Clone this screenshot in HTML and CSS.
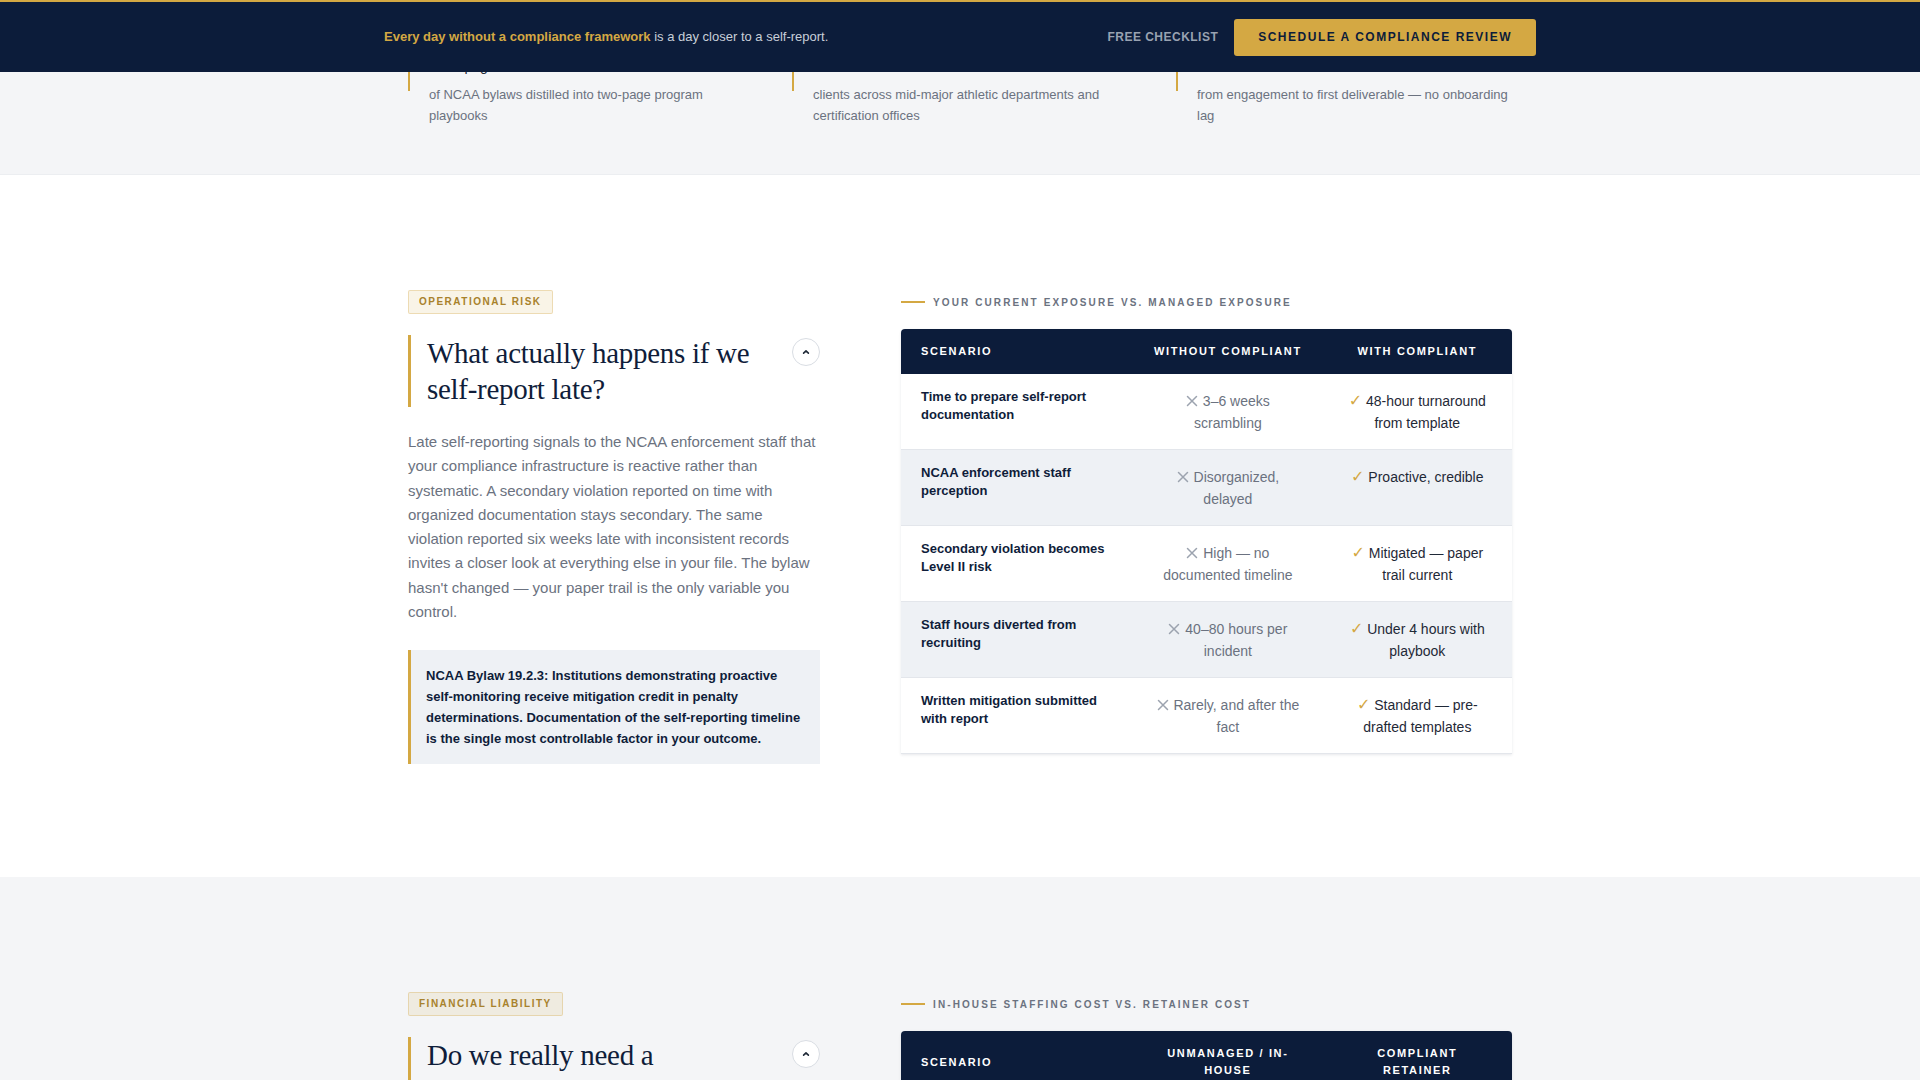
FILE: index.html
```html
<!DOCTYPE html>
<html lang="en">
<head>
<meta charset="utf-8">
<title>Compliant — NCAA Compliance</title>
<link rel="stylesheet" href="styles.css">
</head>
<body>
<header class="topbar">
  <div class="topbar-inner">
    <p class="topbar-msg"><strong>Every day without a compliance framework</strong> is a day closer to a self-report.</p>
    <nav class="topbar-actions">
      <a class="link-checklist" href="#">FREE CHECKLIST</a>
      <a class="btn-gold" href="#">SCHEDULE A COMPLIANCE REVIEW</a>
    </nav>
  </div>
</header>

<section class="stats">
  <div class="container stats-grid">
    <div class="stat">
      <div class="stat-head">
        <div class="stat-num">1,100+</div>
        <div class="stat-label">300+ pages</div>
      </div>
      <p class="stat-desc">of NCAA bylaws distilled into two-page program playbooks</p>
    </div>
    <div class="stat">
      <div class="stat-head">
        <div class="stat-num">40+</div>
        <div class="stat-label">active clients</div>
      </div>
      <p class="stat-desc">clients across mid-major athletic departments and certification offices</p>
    </div>
    <div class="stat">
      <div class="stat-head">
        <div class="stat-num">48 hrs</div>
        <div class="stat-label">to kickoff</div>
      </div>
      <p class="stat-desc">from engagement to first deliverable — no onboarding lag</p>
    </div>
  </div>
</section>

<section class="risk risk-white">
  <div class="container risk-grid">
    <div class="risk-copy">
      <span class="badge">OPERATIONAL RISK</span>
      <div class="q-row">
        <h2 class="q-title">What actually happens if we self-report late?</h2>
        <button class="toggle" aria-label="Collapse">
          <svg width="10" height="10" viewBox="0 0 10 10"><path d="M2.6 6.1 L5 3.8 L7.4 6.1" fill="none" stroke="#1f2937" stroke-width="1.6" stroke-linecap="round" stroke-linejoin="round"/></svg>
        </button>
      </div>
      <p class="q-body">Late self-reporting signals to the NCAA enforcement staff that your compliance infrastructure is reactive rather than systematic. A secondary violation reported on time with organized documentation stays secondary. The same violation reported six weeks late with inconsistent records invites a closer look at everything else in your file. The bylaw hasn't changed — your paper trail is the only variable you control.</p>
      <div class="callout">NCAA Bylaw 19.2.3: Institutions demonstrating proactive self-monitoring receive mitigation credit in penalty determinations. Documentation of the self-reporting timeline is the single most controllable factor in your outcome.</div>
    </div>
    <div class="risk-data">
      <div class="eyebrow"><span class="dash"></span>YOUR CURRENT EXPOSURE VS. MANAGED EXPOSURE</div>
      <table class="cmp">
        <colgroup><col class="c1"><col class="c2"><col class="c3"></colgroup>
        <thead>
          <tr><th class="th-left">SCENARIO</th><th>WITHOUT COMPLIANT</th><th>WITH COMPLIANT</th></tr>
        </thead>
        <tbody>
          <tr><td class="sc">Time to prepare self-report documentation</td><td class="bad"><svg class="x" width="12" height="12" viewBox="0 0 12 12"><path d="M1.5 1.5 L10.5 10.5 M10.5 1.5 L1.5 10.5" stroke="#9ca3af" stroke-width="1.5" stroke-linecap="round"/></svg> 3–6 weeks scrambling</td><td class="good"><span class="ck">✓</span> 48-hour turnaround from template</td></tr>
          <tr><td class="sc">NCAA enforcement staff perception</td><td class="bad"><svg class="x" width="12" height="12" viewBox="0 0 12 12"><path d="M1.5 1.5 L10.5 10.5 M10.5 1.5 L1.5 10.5" stroke="#9ca3af" stroke-width="1.5" stroke-linecap="round"/></svg> Disorganized, delayed</td><td class="good"><span class="ck">✓</span> Proactive, credible</td></tr>
          <tr><td class="sc">Secondary violation becomes Level II risk</td><td class="bad"><svg class="x" width="12" height="12" viewBox="0 0 12 12"><path d="M1.5 1.5 L10.5 10.5 M10.5 1.5 L1.5 10.5" stroke="#9ca3af" stroke-width="1.5" stroke-linecap="round"/></svg> High — no documented timeline</td><td class="good"><span class="ck">✓</span> Mitigated — paper trail current</td></tr>
          <tr><td class="sc">Staff hours diverted from recruiting</td><td class="bad"><svg class="x" width="12" height="12" viewBox="0 0 12 12"><path d="M1.5 1.5 L10.5 10.5 M10.5 1.5 L1.5 10.5" stroke="#9ca3af" stroke-width="1.5" stroke-linecap="round"/></svg> 40–80 hours per incident</td><td class="good"><span class="ck">✓</span> Under 4 hours with playbook</td></tr>
          <tr><td class="sc">Written mitigation submitted with report</td><td class="bad"><svg class="x" width="12" height="12" viewBox="0 0 12 12"><path d="M1.5 1.5 L10.5 10.5 M10.5 1.5 L1.5 10.5" stroke="#9ca3af" stroke-width="1.5" stroke-linecap="round"/></svg> Rarely, and after the fact</td><td class="good"><span class="ck">✓</span> Standard — pre-drafted templates</td></tr>
        </tbody>
      </table>
    </div>
  </div>
</section>

<section class="risk risk-gray">
  <div class="container risk-grid">
    <div class="risk-copy">
      <span class="badge">FINANCIAL LIABILITY</span>
      <div class="q-row">
        <h2 class="q-title">Do we really need a compliance retainer?</h2>
        <button class="toggle" aria-label="Collapse">
          <svg width="10" height="10" viewBox="0 0 10 10"><path d="M2.6 6.1 L5 3.8 L7.4 6.1" fill="none" stroke="#1f2937" stroke-width="1.6" stroke-linecap="round" stroke-linejoin="round"/></svg>
        </button>
      </div>
      <p class="q-body">A single Level II case can cost more in outside counsel, staff time and lost scholarships than years of proactive compliance support.</p>
    </div>
    <div class="risk-data">
      <div class="eyebrow"><span class="dash"></span>IN-HOUSE STAFFING COST VS. RETAINER COST</div>
      <table class="cmp">
        <colgroup><col class="c1"><col class="c2"><col class="c3"></colgroup>
        <thead>
          <tr><th class="th-left">SCENARIO</th><th>UNMANAGED / IN-HOUSE</th><th>COMPLIANT RETAINER</th></tr>
        </thead>
        <tbody>
          <tr><td class="sc">Annual compliance staffing</td><td class="bad"><svg class="x" width="12" height="12" viewBox="0 0 12 12"><path d="M1.5 1.5 L10.5 10.5 M10.5 1.5 L1.5 10.5" stroke="#9ca3af" stroke-width="1.5" stroke-linecap="round"/></svg> $85K+ per FTE</td><td class="good"><span class="ck">✓</span> Fixed monthly retainer</td></tr>
          <tr><td class="sc">Outside counsel on a Level II case</td><td class="bad"><svg class="x" width="12" height="12" viewBox="0 0 12 12"><path d="M1.5 1.5 L10.5 10.5 M10.5 1.5 L1.5 10.5" stroke="#9ca3af" stroke-width="1.5" stroke-linecap="round"/></svg> $150K–$400K</td><td class="good"><span class="ck">✓</span> Rarely needed</td></tr>
        </tbody>
      </table>
    </div>
  </div>
</section>
</body>
</html>
```

FILE: styles.css
```css
* { box-sizing: border-box; }

html, body {
  margin: 0;
  padding: 0;
}

body {
  font-family: "Liberation Sans", Arial, Helvetica, sans-serif;
  background: #ffffff;
  color: #0f1d3a;
}

.container {
  max-width: 1152px;
  margin: 0 auto;
  padding: 0 24px;
}

/* ---------- Top bar ---------- */
.topbar {
  position: fixed;
  top: 0;
  left: 0;
  right: 0;
  z-index: 10;
  height: 72px;
  background: #0c1c3a;
  border-top: 2px solid #d4a843;
}

.topbar-inner {
  max-width: 1200px;
  height: 100%;
  margin: 0 auto;
  padding: 0 24px;
  display: flex;
  align-items: center;
  justify-content: space-between;
}

.topbar-msg {
  margin: 0 0 1px;
  font-size: 13px;
  color: #c8cfd9;
}

.topbar-msg strong {
  color: #d4a843;
  font-weight: 700;
}

.topbar-actions {
  display: flex;
  align-items: center;
  gap: 16px;
}

.link-checklist {
  font-size: 12px;
  font-weight: 700;
  letter-spacing: 0.04em;
  color: #99a2b1;
  text-decoration: none;
}

.btn-gold {
  display: inline-flex;
  align-items: center;
  height: 37px;
  padding: 0 24px;
  background: #d4a843;
  color: #0c1c3a;
  border-radius: 3px;
  font-size: 12px;
  font-weight: 700;
  letter-spacing: 1.5px;
  text-decoration: none;
}

/* ---------- Stats strip ---------- */
.stats {
  background: #f4f5f7;
  padding: 16px 0 48px;
  border-bottom: 1px solid #eceef1;
}

.stats-grid {
  display: grid;
  grid-template-columns: repeat(3, 1fr);
  gap: 48px;
}

.stat-head {
  border-left: 2px solid #d4a843;
  padding: 0 0 15px 19px;
}

.stat-num {
  font-family: "Liberation Serif", "Times New Roman", serif;
  font-size: 30px;
  line-height: 36px;
  color: #0f1d3a;
}

.stat-label {
  margin-top: 4px;
  font-size: 14px;
  line-height: 20px;
  color: #1f2937;
}

.stat-desc {
  margin: -7px 0 0;
  padding-left: 21px;
  font-size: 13px;
  line-height: 21px;
  color: #6b7280;
}

/* ---------- Risk sections ---------- */
.risk {
  padding: 115px 0 113px;
}

.risk-white { background: #ffffff; }
.risk-gray { background: #f4f5f7; }

.risk-grid {
  display: grid;
  grid-template-columns: 412px 1fr;
  gap: 81px;
  align-items: start;
}

.badge {
  display: inline-block;
  padding: 5px 10px;
  font-size: 10px;
  line-height: 12px;
  font-weight: 700;
  letter-spacing: 1.5px;
  color: #a8822c;
  background: rgba(212, 168, 67, 0.13);
  border: 1px solid rgba(212, 168, 67, 0.32);
  border-radius: 2px;
}

.q-row {
  margin-top: 21px;
  display: flex;
  align-items: flex-start;
  gap: 16px;
  border-left: 3px solid #d4a843;
  padding-left: 16px;
}

.q-title {
  flex: 1;
  margin: 0;
  font-family: "Liberation Serif", "Times New Roman", serif;
  font-weight: 400;
  font-size: 29px;
  line-height: 36px;
  color: #0f1d3a;
  letter-spacing: -0.01em;
}

.toggle {
  flex: none;
  width: 28px;
  height: 28px;
  margin-top: 3px;
  border-radius: 50%;
  border: 1px solid #d9dde3;
  background: #ffffff;
  display: flex;
  align-items: center;
  justify-content: center;
  padding: 0;
}

.q-body {
  margin: 23px 0 0;
  font-size: 15px;
  line-height: 24.3px;
  color: #6b7280;
}

.callout {
  margin-top: 26px;
  padding: 15px 16px 15px 15px;
  background: #eef1f5;
  border-left: 3px solid #d4a843;
  font-size: 13px;
  line-height: 21px;
  font-weight: 700;
  color: #0f1d3a;
}

.eyebrow {
  display: flex;
  align-items: center;
  gap: 8px;
  height: 24px;
  font-size: 10px;
  font-weight: 700;
  letter-spacing: 0.21em;
  color: #6b7280;
}

.dash {
  display: block;
  width: 24px;
  height: 2px;
  background: #d4a843;
}

.cmp {
  margin-top: 15px;
  width: 100%;
  border-collapse: separate;
  border-spacing: 0;
  table-layout: fixed;
  background: #ffffff;
  border-radius: 4px 4px 0 0;
  overflow: hidden;
  box-shadow: 0 1px 3px rgba(15, 29, 58, 0.10);
}

.c1 { width: 38%; }
.c2 { width: 31%; }
.c3 { width: 31%; }

.cmp th {
  background: #0c1c3a;
  color: #ffffff;
  font-size: 11px;
  line-height: 16.5px;
  font-weight: 700;
  letter-spacing: 0.15em;
  padding: 14px 20px;
  text-align: center;
  vertical-align: middle;
}

.cmp th.th-left { text-align: left; }

.cmp td {
  padding: 16px 20px 15px;
  vertical-align: top;
  border-bottom: 1px solid #e3e6eb;
  font-size: 14px;
  line-height: 22px;
}

.cmp tbody tr:nth-child(even) td { background: #eef1f5; }

.cmp td.sc {
  padding-top: 14px;
  font-size: 13px;
  line-height: 18.5px;
  font-weight: 700;
  color: #0f1d3a;
}

.cmp td.bad {
  text-align: center;
  color: #6b7280;
}

.cmp td.good {
  text-align: center;
  color: #1f2937;
}

.x {
  display: inline-block;
  vertical-align: -1px;
  margin-right: 1px;
}

.ck {
  font-family: "DejaVu Sans", sans-serif;
  color: #d4a843;
  font-size: 16px;
  line-height: 14px;
}
```
